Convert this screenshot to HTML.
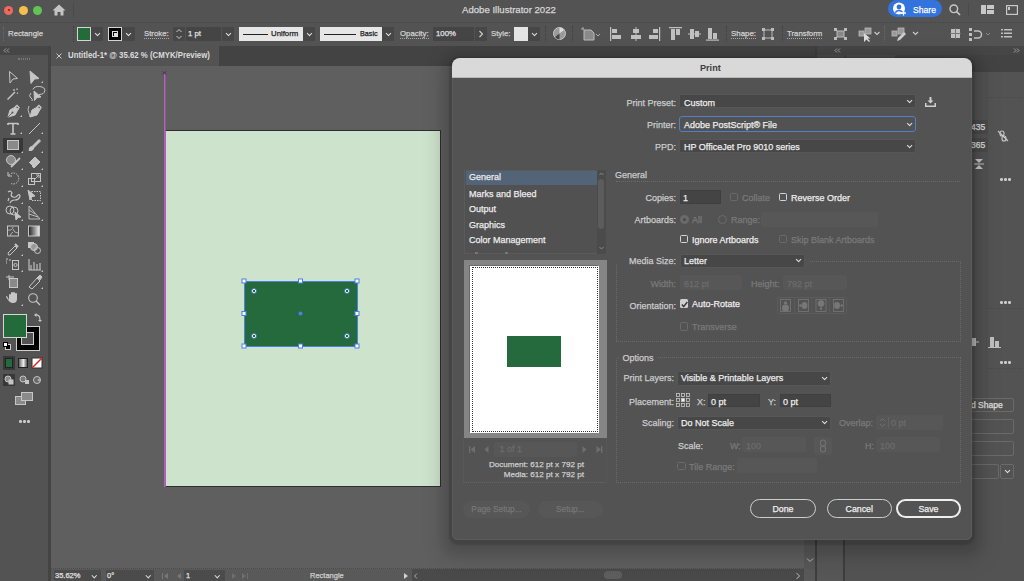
<!DOCTYPE html>
<html><head><meta charset="utf-8">
<style>
*{margin:0;padding:0;box-sizing:border-box}
html,body{width:1024px;height:581px;overflow:hidden;background:#535353;font-family:"Liberation Sans",sans-serif;color:#d8d8d8}
.a{position:absolute}
.t{position:absolute;white-space:nowrap;line-height:1;-webkit-text-stroke:0.25px currentColor}
svg{position:absolute;overflow:visible}
#titlebar{left:0;top:0;width:1024px;height:22px;background:#535353}
#ctrl{left:0;top:22px;width:1024px;height:24px;background:#535353;border-top:1px dotted #454545}
#tabbar{left:49px;top:46px;width:769px;height:20px;background:#434343}
#tab{left:51px;top:46px;width:168px;height:20px;background:#535353}
#tools{left:0;top:46px;width:48px;height:535px;background:#535353}
#toolsedge{left:48px;top:46px;width:3px;height:535px;background:#444444}
#canvas{left:51px;top:66px;width:753px;height:503px;background:#5f5f5f}
#vscroll{left:804px;top:66px;width:12px;height:503px;background:#575757}
#status{left:51px;top:569px;width:765px;height:12px;background:#595959}
#rpanel{left:816px;top:46px;width:208px;height:535px;background:#535353}
#artboard{left:165px;top:130px;width:276px;height:357px;background:#cde3cc;border:1px solid #2e2e2e;border-left:1px solid #b25bbf}
#dlg{left:452px;top:58px;width:520px;height:482px;background:#535353;border-radius:8px 8px 6px 6px;box-shadow:inset 1px 0 0 #5b5b5b,inset -1px 0 0 #5b5b5b,inset 0 -1px 0 #5b5b5b,0 2px 2px 3px rgba(0,0,0,.14),0 5px 8px 10px rgba(0,0,0,.09),0 10px 20px 14px rgba(0,0,0,.08)}
#dlgtitle{left:0;top:0;width:520px;height:20px;background:#d8d9d8;border-radius:8px 8px 0 0;border-bottom:1px solid #b8b8b8}
.cb{font-size:7.8px;color:#d0d0d0}
.lbl{font-size:9.8px;color:#cdcdcd;margin-top:-0.7px}
.val{font-size:9.8px;color:#eeeeee;margin-top:-0.7px}
.dis{font-size:9.8px;color:#7a7a7a;margin-top:-0.7px}
.dd{position:absolute;background:#474747;border-radius:2px}
.box{position:absolute;background:#474747}
.chev{position:absolute;width:4.2px;height:4.2px;border-right:1.3px solid #e0e0e0;border-bottom:1.3px solid #e0e0e0;transform:translate(0.5px,0.5px) rotate(45deg)}
.sep{position:absolute;width:1px;border-left:1px dotted #3f3f3f}
</style></head><body>
<!-- TITLE BAR -->
<div id="titlebar" class="a">
  <div class="a" style="left:4px;top:5.5px;width:9px;height:9px;border-radius:50%;background:#ec6a5e"></div>
  <div class="a" style="left:7.5px;top:9px;width:2px;height:2px;border-radius:50%;background:#8c1a10"></div>
  <div class="a" style="left:18.5px;top:5.5px;width:9px;height:9px;border-radius:50%;background:#f4bf4f"></div>
  <div class="a" style="left:32.5px;top:5.5px;width:9px;height:9px;border-radius:50%;background:#61c554"></div>
  <svg style="left:52px;top:4px" width="14" height="12" viewBox="0 0 14 12"><path d="M7 0.5 L13.5 6.5 L11.5 6.5 L11.5 11.5 L8.5 11.5 L8.5 8 L5.5 8 L5.5 11.5 L2.5 11.5 L2.5 6.5 L0.5 6.5 Z" fill="#c4c4c4"/></svg>
  <div class="a" style="left:73px;top:3px;width:1px;height:14px;background:#4a4a4a"></div>
  <div class="t" style="left:462px;top:5px;font-size:9.6px;color:#d6d6d6">Adobe Illustrator 2022</div>
  <div class="a" style="left:888px;top:0px;width:54px;height:17px;border-radius:9px;background:#3373dd"></div>
  <svg style="left:893px;top:2px" width="14" height="14" viewBox="0 0 14 14"><circle cx="6" cy="6.5" r="6" fill="#fff"/><circle cx="6" cy="5" r="2.4" fill="#3373dd"/><path d="M2.2 10.5 Q6 6.5 9.8 10.5" stroke="#3373dd" stroke-width="1.6" fill="none"/><path d="M10.5 8.5 v5 M8 11 h5" stroke="#fff" stroke-width="1.3"/></svg>
  <div class="t" style="left:912.5px;top:4.6px;font-size:9.6px;color:#fff;transform:scaleX(0.9);transform-origin:0 0">Share</div>
  <svg style="left:949px;top:4px" width="12" height="12" viewBox="0 0 12 12"><circle cx="4.8" cy="4.8" r="3.8" stroke="#c8c8c8" stroke-width="1.4" fill="none"/><path d="M7.6 7.6 L11 11" stroke="#c8c8c8" stroke-width="1.6"/></svg>
  <div class="a" style="left:968px;top:3px;width:1px;height:13px;background:#4a4a4a"></div>
  <svg style="left:981px;top:5px" width="13" height="9" viewBox="0 0 13 9"><rect x="0" y="0" width="5" height="9" fill="#c8c8c8"/><rect x="6" y="0" width="7" height="4" fill="#c8c8c8"/><rect x="6" y="5" width="7" height="4" fill="#c8c8c8"/></svg>
  <svg style="left:1006px;top:5px" width="12" height="10" viewBox="0 0 12 10"><rect x="0.6" y="0.6" width="10.8" height="8.8" stroke="#c8c8c8" stroke-width="1.2" fill="none"/><rect x="2" y="2" width="2" height="3" fill="#c8c8c8"/></svg>
</div>

<!-- CONTROL BAR -->
<div id="ctrl" class="a"></div>
<div class="sep" style="left:3px;top:27px;height:14px;border-left-color:#6a6a6a"></div>
<div class="t cb" style="left:8px;top:30px">Rectangle</div>
<div class="sep" style="left:73px;top:26px;height:16px"></div>
<div class="a" style="left:77px;top:27px;width:14px;height:14px;background:#246b3c;border:1px solid #d4d4d4"></div>
<div class="box" style="left:91px;top:27px;width:12px;height:14px"></div>
<div class="chev" style="left:94.5px;top:30.5px;width:4px;height:4px"></div>
<div class="a" style="left:108px;top:27px;width:14px;height:14px;background:#000;border:1px solid #d4d4d4"></div>
<div class="a" style="left:112px;top:31px;width:6px;height:6px;border:1px solid #ddd;background:#000"></div>
<div class="a" style="left:113.5px;top:32.5px;width:3px;height:3px;background:#ddd"></div>
<div class="box" style="left:122px;top:27px;width:13px;height:14px"></div>
<div class="chev" style="left:126px;top:30.5px;width:4px;height:4px"></div>
<div class="t cb" style="left:144px;top:30px;border-bottom:1px dotted #aaa;padding-bottom:0px">Stroke:</div>
<div class="box" style="left:173px;top:27px;width:12px;height:14px"></div>
<svg style="left:175px;top:28px" width="8" height="12" viewBox="0 0 8 12"><path d="M1.5 4 L4 1.5 L6.5 4 M1.5 8 L4 10.5 L6.5 8" stroke="#cfcfcf" stroke-width="1" fill="none"/></svg>
<div class="box" style="left:186px;top:27px;width:35px;height:14px;background:#454545"></div>
<div class="t cb" style="left:188px;top:30px;color:#e0e0e0">1 pt</div>
<div class="box" style="left:222px;top:27px;width:12px;height:14px"></div>
<div class="chev" style="left:225.5px;top:30.5px;width:4px;height:4px"></div>
<div class="a" style="left:239px;top:27px;width:64px;height:14px;background:#e6e6e6"></div>
<div class="a" style="left:243px;top:33.5px;width:25px;height:1.3px;background:#222"></div>
<div class="t cb" style="left:271px;top:30px;color:#222">Uniform</div>
<div class="box" style="left:303px;top:27px;width:12px;height:14px"></div>
<div class="chev" style="left:306.5px;top:30.5px;width:4px;height:4px"></div>
<div class="a" style="left:320px;top:27px;width:62px;height:14px;background:#e6e6e6"></div>
<div class="a" style="left:324px;top:33.5px;width:32px;height:1.3px;background:#222"></div>
<div class="t cb" style="left:360px;top:30px;color:#222;font-size:7.2px">Basic</div>
<div class="box" style="left:382px;top:27px;width:12px;height:14px"></div>
<div class="chev" style="left:385.5px;top:30.5px;width:4px;height:4px"></div>
<div class="t cb" style="left:400px;top:30px;border-bottom:1px dotted #aaa">Opacity:</div>
<div class="box" style="left:433px;top:27px;width:41px;height:14px;background:#454545"></div>
<div class="t cb" style="left:436px;top:30px;color:#e0e0e0">100%</div>
<div class="box" style="left:475px;top:27px;width:12px;height:14px"></div>
<svg style="left:478px;top:30px" width="6" height="8" viewBox="0 0 6 8"><path d="M1.5 1 L4.5 4 L1.5 7" stroke="#cfcfcf" stroke-width="1.1" fill="none"/></svg>
<div class="t cb" style="left:491px;top:30px">Style:</div>
<div class="a" style="left:514px;top:27px;width:14px;height:14px;background:#e4e4e4"></div>
<div class="box" style="left:528px;top:27px;width:12px;height:14px"></div>
<div class="chev" style="left:531.5px;top:30.5px;width:4px;height:4px"></div>
<div class="sep" style="left:545px;top:26px;height:16px"></div>
<svg style="left:553px;top:27px" width="13" height="13" viewBox="0 0 13 13"><circle cx="6.5" cy="6.5" r="6" fill="#9a9a9a"/><circle cx="6.5" cy="6.5" r="6" fill="none" stroke="#c8c8c8" stroke-width="1"/><path d="M6.5 6.5 L2 10 A6 6 0 0 0 6.5 12.5 Z" fill="#444"/><path d="M6.5 6.5 L11 3 A6 6 0 0 0 6.5 0.5 Z" fill="#ddd"/></svg>
<div class="sep" style="left:572px;top:26px;height:16px"></div>
<svg style="left:581px;top:27px" width="22" height="14" viewBox="0 0 22 14"><path d="M2 0 v3 M0 2 h3" stroke="#aaa" stroke-width="1"/><path d="M3 3 h7 l3 3 v7 h-10 z" fill="#8a8a8a" stroke="#bbb" stroke-width="1"/><path d="M15 7 l2 2 l2 -2" stroke="#aaa" fill="none"/></svg>
<!-- align icons -->
<svg style="left:610px;top:27px" width="112" height="14" viewBox="0 0 112 14" fill="#c0c0c0">
 <rect x="0" y="0" width="1.2" height="14"/><rect x="2" y="2" width="5" height="4"/><rect x="2" y="8" width="9" height="4"/>
 <rect x="25.5" y="0" width="1" height="14"/><rect x="23" y="2" width="6" height="4"/><rect x="21" y="8" width="10" height="4"/>
 <rect x="49" y="0" width="1.2" height="14"/><rect x="43" y="2" width="5" height="4"/><rect x="39" y="8" width="9" height="4"/>
 <rect x="59" y="0" width="13" height="1.2"/><rect x="61" y="2" width="4" height="11"/><rect x="66" y="2" width="4" height="6"/>
 <rect x="78" y="6.5" width="13" height="1"/><rect x="80" y="2" width="4" height="10"/><rect x="85" y="4" width="4" height="6"/>
 <rect x="96" y="12.5" width="13" height="1.2"/><rect x="98" y="1" width="4" height="11"/><rect x="103" y="6" width="4" height="6"/>
</svg>
<div class="sep" style="left:726px;top:26px;height:16px"></div>
<div class="t cb" style="left:731px;top:30px;border-bottom:1px dotted #aaa;font-size:7.9px">Shape:</div>
<svg style="left:762px;top:28px" width="12" height="12" viewBox="0 0 12 12"><rect x="2" y="2" width="8" height="8" fill="none" stroke="#bbb" stroke-width="1"/><rect x="0" y="0" width="3" height="3" fill="#bbb"/><rect x="9" y="0" width="3" height="3" fill="#bbb"/><rect x="0" y="9" width="3" height="3" fill="#bbb"/><rect x="9" y="9" width="3" height="3" fill="#bbb"/></svg>
<div class="sep" style="left:782px;top:26px;height:16px"></div>
<div class="t cb" style="left:787px;top:30px;border-bottom:1px dotted #aaa">Transform</div>
<svg style="left:834px;top:28px" width="13" height="12" viewBox="0 0 13 12"><rect x="3" y="3" width="7" height="6" fill="#888" stroke="#bbb" stroke-width="1"/><path d="M0 0 h3 v3 h-3z M10 0 h3 v3 h-3z M0 9 h3 v3 h-3z M10 9 h3 v3 h-3z" fill="#bbb"/></svg>
<svg style="left:859px;top:28px" width="26" height="14" viewBox="0 0 26 14"><rect x="0" y="3" width="5" height="5" fill="#999" stroke="#bbb" stroke-width="0.8"/><rect x="6" y="0" width="6" height="6" fill="#999" stroke="#bbb" stroke-width="0.8"/><path d="M5 5 l0 9 l2.5 -2.5 l2.5 2.5 l1 -1 l-2.5 -2.5 l3 0 z" fill="#ddd"/><path d="M15.5 4 l2.5 2.5 l2.5 -2.5" stroke="#ccc" stroke-width="1.1" fill="none"/></svg>
<div class="sep" style="left:884px;top:26px;height:16px;border-left-color:#6a6a6a"></div>
<svg style="left:892px;top:28px" width="28" height="14" viewBox="0 0 28 14"><rect x="0" y="3" width="5" height="5" fill="#999" stroke="#bbb" stroke-width="0.8"/><rect x="6" y="0" width="6" height="6" fill="#999" stroke="#bbb" stroke-width="0.8"/><path d="M5 13 l1 -3 l6 -6 l2 2 l-6 6 z" fill="#ccc"/><path d="M21 4 l2.5 2.5 l2.5 -2.5" stroke="#ccc" stroke-width="1.1" fill="none"/></svg>
<svg style="left:950px;top:28px" width="11" height="11" viewBox="0 0 11 11" fill="#c0c0c0"><rect x="1" y="1" width="4" height="4"/><rect x="6" y="1" width="4" height="4"/><rect x="1" y="6" width="4" height="4"/><rect x="6" y="6" width="4" height="4"/><rect x="5" y="0" width="1" height="11" fill="#777"/><rect x="0" y="5" width="11" height="1" fill="#777"/></svg>
<svg style="left:969px;top:28px" width="24" height="13" viewBox="0 0 24 13"><rect x="0" y="0" width="3" height="3" fill="#c0c0c0"/><rect x="0" y="5" width="3" height="3" fill="#c0c0c0"/><rect x="0" y="10" width="3" height="3" fill="#c0c0c0"/><path d="M5 3 h4 a3.5 3.5 0 0 1 0 7 h-4" stroke="#c0c0c0" stroke-width="1.5" fill="none"/><path d="M17 5 l2 2 l2 -2" stroke="#888" stroke-width="1" fill="none"/></svg>
<svg style="left:1001px;top:29px" width="11" height="9" viewBox="0 0 11 9" fill="#c0c0c0"><rect x="0" y="0" width="2" height="1.5"/><rect x="3" y="0" width="8" height="1.5"/><rect x="0" y="3.5" width="2" height="1.5"/><rect x="3" y="3.5" width="8" height="1.5"/><rect x="0" y="7" width="2" height="1.5"/><rect x="3" y="7" width="8" height="1.5"/></svg>

<!-- TOOLBAR, TABS, CANVAS -->
<div id="tools" class="a"></div>
<div id="toolsedge" class="a"></div>

<!-- TOOL ICONS -->
<div class="a" style="left:0;top:46px;width:48px;height:9px;background:#464646"></div>
<svg style="left:3px;top:48px" width="7" height="5" viewBox="0 0 7 5"><path d="M3 0.5 L1 2.5 L3 4.5 M6 0.5 L4 2.5 L6 4.5" stroke="#aaa" stroke-width="0.9" fill="none"/></svg>
<div class="a" style="left:18px;top:58px;width:12px;height:2px;border-top:1px dotted #777;border-bottom:1px dotted #777"></div>
<div class="a" style="left:3px;top:138px;width:20px;height:15px;background:#383838"></div>
<svg style="left:0;top:62px" width="48" height="250" viewBox="0 0 48 250" fill="none" stroke="#c6c6c6" stroke-width="1">
 <!-- row1 y=15 -->
 <path d="M9.5 9.5 L17.5 16.5 L13 17 L10 21 Z"/>
 <path d="M30 9 L39 16.5 L34.5 17 L31 21.5 Z" fill="#c6c6c6"/>
 <path d="M41 21 l2 -2 v2 z" fill="#c6c6c6" stroke="none"/>
 <!-- row2 y=32 -->
 <path d="M7.5 37.5 L15 30" stroke-width="1.4"/><path d="M14 27 v2 M13 28 h2 M17 26.5 v1.5 M16.3 27.2 h1.5 M17.5 30.5 v1.3 M16.8 31.2 h1.3" stroke-width="0.8"/>
 <path d="M33 27.5 a6 4 0 1 1 6 5" /><path d="M31 31 q-3 3 0 5 q2 1 1 3"/><path d="M34 29 L41 35 L37 35.5 L34.5 38.5 Z" fill="#c6c6c6"/>
 <!-- row3 y=49 -->
 <path d="M8 55 L10 48 L15.5 45 L18 47.5 L15 53 Z" fill="#c6c6c6"/><path d="M15 45 l2 -1.5 l2 2 l-1.5 2" stroke-width="1.4"/><circle cx="12.5" cy="50.5" r="1" fill="#535353" stroke="none"/><path d="M8 55 l4 -4" stroke="#535353" stroke-width="0.8"/>
 <path d="M20 55 l2 -2 v2 z" fill="#c6c6c6" stroke="none"/>
 <path d="M30 55 L32 48 L37.5 45 L40 47.5 L37 53 Z" fill="#c6c6c6"/><path d="M37 45 l2 -1.5 l2 2 l-1.5 2" stroke-width="1.4"/><path d="M29 44 q-2 4 0 7 q1 3 1 4" stroke-width="0.9"/>
 <!-- row4 y=66 -->
 <path d="M8 61.5 h10 M13 61.5 v10.5 M10.5 72 h5 M8 61 v2 M18 61 v2" stroke-width="1.6"/>
 <path d="M20 72 l2 -2 v2 z" fill="#c6c6c6" stroke="none"/>
 <path d="M29 72 L40 61"/>
 <path d="M41 72 l2 -2 v2 z" fill="#c6c6c6" stroke="none"/>
 <!-- row5 y=83 rect, brush -->
 <rect x="7.5" y="78.5" width="11" height="9" fill="#8a8a8a" stroke="#c6c6c6"/>
 <path d="M21 91 l2 -2 v2 z" fill="#c6c6c6" stroke="none"/>
 <path d="M29 88.5 q0 -4 3 -4 l7 -7 l1.5 1.5 l-7 7 q0 3 -4.5 2.5 z" fill="#c6c6c6"/>
 <path d="M41 91 l2 -2 v2 z" fill="#c6c6c6" stroke="none"/>
 <!-- row6 y=100 shaper, eraser -->
 <circle cx="11" cy="98" r="4.5" fill="#8a8a8a"/><path d="M11 105 L20 96" stroke-width="1.8"/>
 <path d="M21 108 l2 -2 v2 z" fill="#c6c6c6" stroke="none"/>
 <path d="M29 101 l6 -6 l5 5 l-6 6 z" fill="#c6c6c6"/><path d="M29 101 l3 3" stroke="#535353"/>
 <path d="M41 108 l2 -2 v2 z" fill="#c6c6c6" stroke="none"/>
 <!-- row7 y=117 rotate, scale -->
 <path d="M9 113 a5.5 5.5 0 1 1 2 8.5" stroke-dasharray="1.5 1"/><path d="M8 110 v4 h4" />
 <path d="M21 125 l2 -2 v2 z" fill="#c6c6c6" stroke="none"/>
 <rect x="28.5" y="116.5" width="6" height="6"/><rect x="31.5" y="111.5" width="9" height="8"/><path d="M34 118 l5 -5 M36 113 h3 v3" stroke-width="0.9"/>
 <path d="M41 125 l2 -2 v2 z" fill="#c6c6c6" stroke="none"/>
 <!-- row8 y=134 warp, free transform -->
 <path d="M8 130 q3 -2 4 1 q-2 3 1 4 q3 1 5 -2 q2 -1 2 1 q-1 4 -5 4 q-4 0 -5 3 M9 136 l-1 3" stroke-width="1.2"/>
 <path d="M21 142 l2 -2 v2 z" fill="#c6c6c6" stroke="none"/>
 <path d="M28 128 L35 134 L32 134.5 L30 138 Z" fill="#c6c6c6"/><rect x="31.5" y="129.5" width="9" height="9" stroke-dasharray="1.5 1"/>
 <path d="M41 142 l2 -2 v2 z" fill="#c6c6c6" stroke="none"/>
 <!-- row9 y=151 shape builder, perspective -->
 <circle cx="10" cy="148" r="4"/><circle cx="14" cy="149" r="4"/><path d="M15 150 L21 155 L18 155.5 L16 158 Z" fill="#c6c6c6"/>
 <path d="M21 159 l2 -2 v2 z" fill="#c6c6c6" stroke="none"/>
 <path d="M29 144 v13 h11 z M29 148 l6 4 M29 152 l9 3" stroke-width="0.9"/>
 <path d="M41 159 l2 -2 v2 z" fill="#c6c6c6" stroke="none"/>
 <!-- row10 y=169 mesh, gradient -->
 <rect x="7.5" y="164" width="11" height="10"/><path d="M8 168 q4 1 5 -3 M13 167 q1 4 5 4 M10 174 q1 -3 3 -4" stroke-width="0.8"/>
 <rect x="28.5" y="164" width="11" height="10" fill="url(#g1)"/>
 <!-- row11 y=186 eyedropper, blend -->
 <path d="M8 191 l7 -7 l2 2 l-7 7 q-2 1 -2 -2 z"/><path d="M15 182 l3 3" stroke-width="2"/>
 <path d="M21 194 l2 -2 v2 z" fill="#c6c6c6" stroke="none"/>
 <rect x="28.5" y="180.5" width="5" height="5" fill="#c6c6c6"/><circle cx="34" cy="185" r="3.5" fill="#999"/><circle cx="37.5" cy="188.5" r="3"/>
 <!-- row12 y=203 symbol sprayer, graph -->
 <path d="M6 197 h2 M6 199 h1 M9 198 h2 M6 201 h1" stroke-width="1"/><rect x="12.5" y="198.5" width="6" height="9"/><circle cx="15.5" cy="203" r="1.6"/>
 <path d="M21 210 l2 -2 v2 z" fill="#c6c6c6" stroke="none"/>
 <path d="M29 197 v11 h12 M31 208 v-5 M34 208 v-8 M37 208 v-6 M40 208 v-7" stroke-width="1.1"/>
 <path d="M41 210 l2 -2 v2 z" fill="#c6c6c6" stroke="none"/>
 <!-- row13 y=220 artboard, slice -->
 <path d="M9 213 v5 M6 215 h8"/><rect x="9.5" y="216.5" width="8" height="9" fill="#8a8a8a"/>
 <path d="M29 225 l8 -9 l3 3 l-8 8 z" fill="none"/><path d="M37 216 l3 -3 l2 2 l-2 3" fill="#c6c6c6"/>
 <path d="M41 227 l2 -2 v2 z" fill="#c6c6c6" stroke="none"/>
 <!-- row14 y=237 hand, zoom -->
 <path d="M9 238 v-5 q0 -1 1 -1 q1 0 1 1 v3 v-5 q0 -1 1 -1 q1 0 1 1 v4 v-4 q0 -1 1 -1 q1 0 1 1 v4 v-3 q0 -1 1 -1 q1 0 1 1 v5 q0 4 -4 4 h-1 q-2 0 -4 -3 l-2 -3 q0 -1 1 -1 z" fill="#c6c6c6" stroke="none"/>
 <path d="M21 244 l2 -2 v2 z" fill="#c6c6c6" stroke="none"/>
 <circle cx="33" cy="236" r="4.3" stroke-width="1.1"/><path d="M36 239 l4 4" stroke-width="1.3"/>
</svg>
<svg width="0" height="0" style="position:absolute"><defs><linearGradient id="g1"><stop offset="0" stop-color="#222"/><stop offset="1" stop-color="#eee"/></linearGradient><linearGradient id="g2"><stop offset="0" stop-color="#777"/><stop offset="0.5" stop-color="#eee"/><stop offset="1" stop-color="#555"/></linearGradient></defs></svg>
<!-- fill/stroke -->
<div class="a" style="left:16px;top:326px;width:24px;height:25px;background:#000;border:1px solid #cfcfcf"></div>
<div class="a" style="left:21px;top:332px;width:13px;height:13px;border:1px solid #cfcfcf;background:#535353"></div>
<div class="a" style="left:22px;top:333px;width:11px;height:11px;background:#535353"></div>
<div class="a" style="left:3px;top:314px;width:24px;height:24px;background:#246b3c;border:1px solid #d6d6d6"></div>
<svg style="left:34px;top:313px" width="8" height="9" viewBox="0 0 8 9"><path d="M1 2 q5 -1 5 5" stroke="#c6c6c6" stroke-width="1.1" fill="none"/><path d="M0 2 l2.5 -2 v4 z M4 7 h4 l-2 2 z" fill="#c6c6c6"/></svg>
<div class="a" style="left:5px;top:344px;width:6px;height:6px;border:1px solid #ccc;background:#000"></div>
<div class="a" style="left:3px;top:342px;width:5px;height:5px;border:1px solid #000;background:#fff"></div>
<!-- color modes -->
<div class="a" style="left:3px;top:356px;width:12px;height:14px;background:#383838"></div>
<div class="a" style="left:5px;top:358px;width:8px;height:10px;background:#246b3c;border:1px solid #222"></div>
<div class="a" style="left:18px;top:358px;width:10px;height:10px;background:linear-gradient(90deg,#666,#eee 55%,#555);border:1px solid #222"></div>
<svg style="left:32px;top:358px" width="10" height="10" viewBox="0 0 10 10"><rect x="0" y="0" width="10" height="10" fill="#fff" stroke="#333" stroke-width="1"/><path d="M0 10 L10 0" stroke="#e0201a" stroke-width="1.5"/></svg>
<div class="a" style="left:3px;top:374px;width:12px;height:12px;background:#383838"></div>
<svg style="left:4px;top:375px" width="40" height="10" viewBox="0 0 40 10" fill="none" stroke="#c6c6c6" stroke-width="1"><circle cx="4" cy="4" r="3" fill="#888"/><rect x="5" y="5" width="4" height="4" fill="#c6c6c6"/><circle cx="19" cy="4" r="3" fill="#777"/><rect x="21" y="5" width="4" height="4" fill="#c6c6c6" stroke="none"/><circle cx="33" cy="5" r="3.5" fill="#666"/><path d="M33 5 l3 -2 v4z" fill="#aaa" stroke="none"/></svg>
<svg style="left:15px;top:392px" width="18" height="13" viewBox="0 0 18 13" fill="none" stroke="#c6c6c6" stroke-width="1"><rect x="0.5" y="4.5" width="10" height="8" fill="#8a8a8a"/><rect x="6.5" y="0.5" width="11" height="8" fill="#8a8a8a"/></svg>
<div class="a" style="left:19px;top:420px;width:2.5px;height:2.5px;border-radius:50%;background:#ccc;box-shadow:4px 0 0 #ccc,8px 0 0 #ccc"></div>
<div id="tabbar" class="a"></div>
<div id="tab" class="a"></div>
<svg style="left:56px;top:53px" width="6" height="6" viewBox="0 0 6 6"><path d="M0.5 0.5 L5.5 5.5 M5.5 0.5 L0.5 5.5" stroke="#c8c8c8" stroke-width="1"/></svg>
<div class="t" style="left:68px;top:51.5px;font-size:8.2px;font-weight:700;color:#dcdcdc;-webkit-text-stroke:0;transform:scaleX(0.955);transform-origin:0 0">Untitled-1* @ 35.62 % (CMYK/Preview)</div>
<div id="canvas" class="a"></div>
<div id="vscroll" class="a"></div>
<div id="status" class="a"></div>
<div id="rpanel" class="a"></div>
<!-- RIGHT PANEL -->
<div class="a" style="left:815px;top:46px;width:2px;height:535px;background:#3e3e3e"></div>
<div class="a" style="left:817px;top:46px;width:207px;height:9px;background:#464646"></div>
<svg style="left:834px;top:48px" width="7" height="5" viewBox="0 0 7 5"><path d="M3 0.5 L1 2.5 L3 4.5 M6 0.5 L4 2.5 L6 4.5" stroke="#aaa" stroke-width="0.9" fill="none"/></svg>
<svg style="left:1013px;top:48px" width="7" height="5" viewBox="0 0 7 5"><path d="M1 0.5 L3 2.5 L1 4.5 M4 0.5 L6 2.5 L4 4.5" stroke="#aaa" stroke-width="0.9" fill="none"/></svg>
<div class="a" style="left:817px;top:55px;width:207px;height:17px;background:#434343"></div>
<div class="a" style="left:817px;top:55px;width:27px;height:3px;background:#4d4d4d"></div>
<div class="a" style="left:846px;top:55px;width:49px;height:3px;background:#4d4d4d"></div>
<div class="a" style="left:817px;top:72px;width:27px;height:509px;background:#575757"></div>
<div class="a" style="left:843px;top:72px;width:2px;height:509px;background:#3e3e3e"></div>
<div class="a" style="left:986px;top:72px;width:1px;height:340px;border-left:1px dotted #4a4a4a"></div>
<div class="box" style="left:968px;top:120px;width:20px;height:14px;background:#4b4b4b"></div>
<div class="t" style="left:971px;top:123px;font-size:8.5px;color:#e0e0e0">435</div>
<div class="box" style="left:968px;top:138px;width:20px;height:14px;background:#4b4b4b"></div>
<div class="t" style="left:971px;top:141px;font-size:8.5px;color:#e0e0e0">365</div>
<svg style="left:997px;top:130px" width="12" height="12" viewBox="0 0 12 12" fill="none" stroke="#c8c8c8" stroke-width="1.1"><rect x="3" y="1" width="4" height="5" rx="2"/><rect x="5" y="6" width="4" height="5" rx="2"/><path d="M1 1 L11 11"/></svg>
<svg style="left:974px;top:158px" width="10" height="12" viewBox="0 0 10 12"><path d="M1 1 h8 l-4 4 z M1 11 h8 l-4 -4z" fill="#c8c8c8"/><path d="M0 6 h10" stroke="#c8c8c8"/></svg>
<div class="a" style="left:1000px;top:178px;width:2.5px;height:2.5px;border-radius:50%;background:#ccc;box-shadow:4px 0 0 #ccc,8px 0 0 #ccc"></div>
<div class="a" style="left:1000px;top:301px;width:2.5px;height:2.5px;border-radius:50%;background:#ccc;box-shadow:4px 0 0 #ccc,8px 0 0 #ccc"></div>
<svg style="left:972px;top:336px" width="32" height="12" viewBox="0 0 32 12" fill="#c0c0c0"><rect x="0" y="2" width="4" height="8"/><rect x="4" y="5.5" width="3" height="1"/><rect x="18" y="1" width="4" height="10"/><rect x="23" y="5" width="4" height="6"/><rect x="16" y="11" width="13" height="1"/></svg><div class="a" style="left:987px;top:97px;width:35px;height:1px;border-top:1px dotted #4a4a4a"></div><div class="a" style="left:987px;top:308px;width:35px;height:1px;border-top:1px dotted #4a4a4a"></div><div class="a" style="left:987px;top:368px;width:35px;height:1px;border-top:1px dotted #4a4a4a"></div>
<div class="a" style="left:1000px;top:361px;width:2.5px;height:2.5px;border-radius:50%;background:#ccc;box-shadow:4px 0 0 #ccc,8px 0 0 #ccc"></div>
<div class="a" style="left:960px;top:398px;width:54px;height:14px;border:1px solid #6a6a6a;border-radius:2px"></div>
<div class="t" style="left:971px;top:401px;font-size:8.5px;color:#e0e0e0">d Shape</div>
<div class="a" style="left:960px;top:419px;width:54px;height:15px;border:1px solid #6a6a6a;border-radius:2px"></div>
<div class="a" style="left:960px;top:441px;width:54px;height:15px;border:1px solid #6a6a6a;border-radius:2px"></div>
<div class="a" style="left:960px;top:464px;width:39px;height:15px;border:1px solid #6a6a6a;border-radius:2px"></div>
<div class="a" style="left:1000px;top:464px;width:14px;height:15px;border:1px solid #6a6a6a;border-radius:2px"></div>
<div class="chev" style="left:1005px;top:468px;width:4px;height:4px"></div>

<div id="artboard" class="a"></div>
<!-- ARTBOARD CONTENT -->
<div class="a" style="left:426px;top:131px;width:14px;height:355px;background:linear-gradient(90deg,rgba(0,0,0,0),rgba(0,0,0,.025))"></div>
<div class="a" style="left:164px;top:72px;width:1px;height:415px;background:#b65cc2"></div><div class="a" style="left:165px;top:72px;width:1px;height:415px;background:rgba(182,92,194,.45)"></div>
<svg style="left:162px;top:71px" width="5" height="4" viewBox="0 0 5 4"><path d="M0.5 0.5 L4.5 3.5 M4.5 0.5 L0.5 3.5" stroke="#4a2a50" stroke-width="0.9"/></svg>

<div class="a" style="left:244px;top:281px;width:114px;height:66px;background:#256a3d;border:1px solid #4a7ee8"></div>
<svg style="left:240px;top:277px" width="122" height="74" viewBox="0 0 122 74">
 <g fill="#fff" stroke="#4a7ee8" stroke-width="1">
  <rect x="2" y="2" width="4" height="4"/><rect x="58.5" y="2" width="4" height="4"/><rect x="115" y="2" width="4" height="4"/>
  <rect x="2" y="34.5" width="4" height="4"/><rect x="115" y="34.5" width="4" height="4"/>
  <rect x="2" y="67" width="4" height="4"/><rect x="58.5" y="67" width="4" height="4"/><rect x="115" y="67" width="4" height="4"/>
 </g>
 <g fill="none" stroke="#fff" stroke-width="1"><circle cx="14" cy="14" r="1.8"/><circle cx="107" cy="14" r="1.8"/><circle cx="14" cy="59" r="1.8"/><circle cx="107" cy="59" r="1.8"/></g>
 <g fill="none" stroke="#4a7ee8" stroke-width="0.7"><circle cx="14" cy="14" r="2.6"/><circle cx="107" cy="14" r="2.6"/><circle cx="14" cy="59" r="2.6"/><circle cx="107" cy="59" r="2.6"/></g>
 <circle cx="60.5" cy="36.5" r="2" fill="#4a7ee8"/>
</svg>

<!-- STATUS BAR -->
<div class="a" style="left:51px;top:568px;width:753px;height:1px;border-top:1px dotted #4c4c4c"></div>
<div class="box" style="left:53.5px;top:570px;width:35px;height:11px;background:#4b4b4b"></div>
<div class="t" style="left:55px;top:572px;font-size:7.5px;color:#e0e0e0">35.62%</div>
<div class="box" style="left:89px;top:570px;width:11.5px;height:11px;background:#4b4b4b"></div>
<div class="chev" style="left:92px;top:572.5px;width:3.5px;height:3.5px"></div>
<div class="box" style="left:105.5px;top:570px;width:36px;height:11px;background:#4b4b4b"></div>
<div class="t" style="left:107px;top:572px;font-size:7.5px;color:#e0e0e0">0°</div>
<div class="box" style="left:142px;top:570px;width:11.5px;height:11px;background:#4b4b4b"></div>
<div class="chev" style="left:146px;top:572.5px;width:3.5px;height:3.5px"></div>
<svg style="left:160px;top:572px" width="30" height="8" viewBox="0 0 30 8" fill="#777"><rect x="2" y="1" width="1" height="6"/><path d="M8 1 v6 l-4 -3z"/><path d="M21 1 v6 l-4 -3z"/></svg>
<div class="box" style="left:183.5px;top:570px;width:28px;height:11px;background:#4b4b4b"></div>
<div class="t" style="left:186px;top:572px;font-size:7.5px;color:#e0e0e0">1</div>
<div class="box" style="left:212px;top:570px;width:12.5px;height:11px;background:#4b4b4b"></div>
<div class="chev" style="left:215px;top:572.5px;width:3.5px;height:3.5px"></div>
<svg style="left:230px;top:572px" width="22" height="8" viewBox="0 0 22 8" fill="#6e6e6e"><path d="M2 1 v6 l4 -3z"/><path d="M12 1 v6 l4 -3z"/><rect x="17" y="1" width="1" height="6"/></svg>
<div class="t" style="left:310px;top:572px;font-size:7.5px;color:#cfcfcf">Rectangle</div>
<div class="a" style="left:412px;top:569px;width:392px;height:12px;background:#4a4a4a"></div><svg style="left:403px;top:572px" width="18" height="8" viewBox="0 0 18 8"><path d="M1 1 v6 l4 -3z" fill="#d0d0d0"/><path d="M14 1.5 l-2.5 2.5 l2.5 2.5" stroke="#aaa" fill="none"/></svg>

<div class="a" style="left:604px;top:571px;width:18px;height:8px;border-radius:4px;background:#5e5e5e"></div>
<svg style="left:795px;top:572px" width="6" height="8" viewBox="0 0 6 8"><path d="M1.5 1 L4.5 4 L1.5 7" stroke="#bbb" stroke-width="1" fill="none"/></svg>
<svg style="left:806px;top:557px" width="8" height="6" viewBox="0 0 8 6"><path d="M1 1.5 L4 4.5 L7 1.5" stroke="#bbb" stroke-width="1" fill="none"/></svg>


<!-- DIALOG -->
<div id="dlg" class="a">
  <div id="dlgtitle" class="a"></div>
</div>

<!-- DIALOG CONTENT -->
<div class="t" style="left:700.4px;top:62.6px;font-size:9.8px;font-weight:700;color:#404040;-webkit-text-stroke:0;transform:scaleX(0.93);transform-origin:0 0">Print</div>

<div class="t lbl" style="transform:scaleX(0.918);transform-origin:100% 0;left:576px;width:100px;text-align:right;top:98.2px">Print Preset:</div>
<div class="dd" style="left:679px;top:94px;width:237px;height:14px;border:1px solid #575757"></div>
<div class="t val" style="transform:scaleX(0.918);transform-origin:0 0;left:684px;top:98.2px">Custom</div>
<div class="chev" style="left:906.5px;top:98px"></div>
<svg style="left:925px;top:97px" width="11" height="10" viewBox="0 0 11 10" fill="#cfcfcf"><rect x="4.5" y="0" width="2" height="4"/><path d="M2.5 3.5 h6 l-3 3 z"/><path d="M0 6 h1.5 v2.5 h8 v-2.5 h1.5 v4 h-11 z"/></svg>

<div class="t lbl" style="transform:scaleX(0.918);transform-origin:100% 0;left:576px;width:100px;text-align:right;top:120.6px">Printer:</div>
<div class="dd" style="left:679px;top:116px;width:237px;height:15.5px;background:#525252;border:1.5px solid #4f81c9;border-radius:3px"></div>
<div class="t val" style="transform:scaleX(0.918);transform-origin:0 0;left:684px;top:120.6px">Adobe PostScript® File</div>
<div class="chev" style="left:906.5px;top:120.5px"></div>

<div class="t lbl" style="transform:scaleX(0.918);transform-origin:100% 0;left:576px;width:100px;text-align:right;top:142.6px">PPD:</div>
<div class="dd" style="left:679px;top:138.5px;width:237px;height:14.5px;border:1px solid #575757"></div>
<div class="t val" style="transform:scaleX(0.918);transform-origin:0 0;left:684px;top:142.6px">HP OfficeJet Pro 9010 series</div>
<div class="chev" style="left:906.5px;top:142.5px"></div>

<!-- list -->
<div class="a" style="left:464px;top:169.5px;width:142px;height:84.5px;background:#515151;border:1px solid #5a5a5a"></div>
<div class="a" style="left:465.5px;top:170.5px;width:131.5px;height:14.7px;background:#536378"></div>
<div class="a" style="left:597px;top:170px;width:8.5px;height:83.5px;background:#4b4b4b"></div>
<div class="a" style="left:598.2px;top:178.6px;width:6.2px;height:50px;border-radius:3px;background:#5c5c5c"></div>
<svg style="left:598px;top:171px" width="7" height="82" viewBox="0 0 7 82"><path d="M1.5 4 L3.5 2 L5.5 4 M1.5 76 L3.5 78 L5.5 76" stroke="#9a9a9a" stroke-width="0.8" fill="none"/></svg>
<div class="t val" style="transform:scaleX(0.918);transform-origin:0 0;left:468.8px;top:173px">General</div>
<div class="t val" style="transform:scaleX(0.918);transform-origin:0 0;left:468.8px;top:189.2px">Marks and Bleed</div>
<div class="t val" style="transform:scaleX(0.918);transform-origin:0 0;left:468.8px;top:204.9px">Output</div>
<div class="t val" style="transform:scaleX(0.918);transform-origin:0 0;left:468.8px;top:220.5px">Graphics</div>
<div class="t val" style="transform:scaleX(0.918);transform-origin:0 0;left:468.8px;top:236px">Color Management</div>
<div class="a" style="left:475px;top:251.5px;width:3px;height:2px;background:#777"></div>
<div class="a" style="left:505px;top:251.5px;width:3px;height:2px;background:#777"></div>

<!-- preview -->
<div class="a" style="left:464px;top:260px;width:143px;height:178px;background:#858585"></div>
<div class="a" style="left:470px;top:265.7px;width:129px;height:167px;background:#fff;box-shadow:-1px -1px 0 #6a6a6a"></div>
<div class="a" style="left:471.5px;top:267px;width:126px;height:164.5px;border:1.5px dotted #333"></div>
<div class="a" style="left:506.6px;top:335.6px;width:54.6px;height:31.8px;background:#256a3d"></div>
<svg style="left:468px;top:443px" width="136" height="14" viewBox="0 0 136 14" fill="#6e6e6e"><rect x="1" y="3" width="1.3" height="7"/><path d="M7 3 v7 l-4.5 -3.5z"/><path d="M20.5 3 v7 l-4 -3.5z"/><path d="M114.5 3 v7 l4 -3.5z"/><path d="M128.5 3 v7 l4.5 -3.5z"/><rect x="133" y="3" width="1.3" height="7"/></svg>
<div class="a" style="left:494px;top:442px;width:83px;height:14.7px;border-radius:2px;background:#575757"></div>
<div class="t dis" style="left:499.5px;top:445.5px;font-size:9px;color:#6c6c6c">1 of 1</div>
<div class="t lbl" style="left:488.6px;top:461.7px;font-size:8.1px;width:95.3px;text-align:right">Document: 612 pt x 792 pt</div>
<div class="t lbl" style="left:488.6px;top:471.4px;font-size:8.1px;width:95.3px;text-align:right">Media: 612 pt x 792 pt</div>
<div class="a" style="left:463px;top:438px;width:144px;height:45px;border-left:1px dotted #5e5e5e;border-bottom:1px dotted #666;border-right:1px dotted #5a5a5a"></div>

<!-- General section -->
<div class="t lbl" style="transform:scaleX(0.918);transform-origin:0 0;left:615.4px;top:171px">General</div>
<div class="a" style="left:616px;top:181px;width:344px;height:1px;border-top:1px dotted #6a6a6a"></div>

<div class="t lbl" style="transform:scaleX(0.918);transform-origin:100% 0;left:576px;width:100px;text-align:right;top:193.4px">Copies:</div>
<div class="a" style="left:680px;top:189.7px;width:41px;height:14.5px;background:#444;border:1px solid #3f3f3f"></div>
<div class="t val" style="transform:scaleX(0.918);transform-origin:0 0;left:683px;top:193.4px">1</div>
<div class="a" style="left:729.5px;top:192.8px;width:8.3px;height:8.3px;border:1px solid #6a6a6a;border-radius:1.5px"></div>
<div class="t dis" style="transform:scaleX(0.918);transform-origin:0 0;left:741.9px;top:193.4px">Collate</div>
<div class="a" style="left:778.6px;top:192.8px;width:8.5px;height:8.5px;border:1px solid #d4d4d4;border-radius:1.5px"></div>
<div class="t val" style="transform:scaleX(0.918);transform-origin:0 0;left:791px;top:193.4px">Reverse Order</div>

<div class="t lbl" style="transform:scaleX(0.918);transform-origin:100% 0;left:576px;width:100px;text-align:right;top:215.4px">Artboards:</div>
<div class="a" style="left:679.5px;top:214.7px;width:9px;height:9px;border-radius:50%;background:#6a6a6a"></div>
<div class="a" style="left:682.5px;top:217.7px;width:3px;height:3px;border-radius:50%;background:#4a4a4a"></div>
<div class="t dis" style="transform:scaleX(0.918);transform-origin:0 0;left:692px;top:215.4px">All</div>
<div class="a" style="left:718px;top:214.7px;width:9px;height:9px;border-radius:50%;border:1px solid #6a6a6a"></div>
<div class="t dis" style="transform:scaleX(0.918);transform-origin:0 0;left:730.6px;top:215.4px">Range:</div>
<div class="a" style="left:761px;top:212px;width:117px;height:14.6px;border-radius:2px;background:#575757"></div>

<div class="a" style="left:679.7px;top:234.7px;width:8.5px;height:8.5px;border:1px solid #d4d4d4;border-radius:1.5px"></div>
<div class="t val" style="transform:scaleX(0.918);transform-origin:0 0;left:691.5px;top:235.5px">Ignore Artboards</div>
<div class="a" style="left:778.6px;top:234.7px;width:8.5px;height:8.5px;border:1px solid #6a6a6a;border-radius:1.5px"></div>
<div class="t dis" style="transform:scaleX(0.918);transform-origin:0 0;left:791px;top:235.5px">Skip Blank Artboards</div>

<div class="a" style="left:616px;top:260.5px;width:344.5px;height:81.5px;border:1px dotted #6a6a6a;border-radius:4px 0 0 0"></div>
<div class="a" style="left:616px;top:259px;width:64px;height:4px;background:#535353"></div><div class="t lbl" style="transform:scaleX(0.918);transform-origin:100% 0;left:576px;width:100px;text-align:right;top:257px">Media Size:</div>
<div class="dd" style="left:679.7px;top:254px;width:125.7px;height:13.5px;border:1px solid #575757;box-shadow:0 0 0 4px #535353"></div>
<div class="t val" style="transform:scaleX(0.918);transform-origin:0 0;left:684px;top:257px">Letter</div>
<div class="chev" style="left:796px;top:256.5px"></div>

<div class="t dis" style="transform:scaleX(0.918);transform-origin:100% 0;left:576px;width:100px;text-align:right;top:279.5px">Width:</div>
<div class="a" style="left:679.5px;top:275.3px;width:62.5px;height:14.7px;border-radius:2px;background:#575757"></div>
<div class="t dis" style="transform:scaleX(0.918);transform-origin:0 0;left:683.5px;top:279.5px;color:#6c6c6c">612 pt</div>
<div class="t dis" style="transform:scaleX(0.918);transform-origin:0 0;left:750.9px;top:279.5px">Height:</div>
<div class="a" style="left:783px;top:275.3px;width:64px;height:14.7px;border-radius:2px;background:#575757"></div>
<div class="t dis" style="transform:scaleX(0.918);transform-origin:0 0;left:787px;top:279.5px;color:#6c6c6c">792 pt</div>

<div class="t lbl" style="transform:scaleX(0.918);transform-origin:100% 0;left:576px;width:100px;text-align:right;top:301.2px">Orientation:</div>
<div class="a" style="left:679.7px;top:299.4px;width:8.6px;height:8.6px;background:#d0d0d0;border-radius:1.5px"></div>
<svg style="left:680px;top:299.5px" width="9" height="9" viewBox="0 0 9 9"><path d="M1.8 4.5 L3.7 6.6 L7.3 2" stroke="#3a3a3a" stroke-width="1.5" fill="none"/></svg>
<div class="t val" style="transform:scaleX(0.918);transform-origin:0 0;left:692px;top:300px">Auto-Rotate</div>
<div class="a" style="left:776.5px;top:297.3px;width:70px;height:17px;border:1px solid #5c5c5c;border-radius:2px"></div>
<svg style="left:776.5px;top:297.3px" width="70" height="17" viewBox="0 0 70 17" fill="none" stroke="#777" stroke-width="0.8">
 <path d="M17.5 1 v15 M35 1 v15 M52.5 1 v15" stroke="#5c5c5c"/>
 <rect x="3.5" y="2.5" width="10" height="12"/><circle cx="8.5" cy="6" r="1.3" fill="#777"/><rect x="5.5" y="8" width="6" height="6" rx="2" fill="#777"/>
 <rect x="21.5" y="2.5" width="10" height="12"/><rect x="25" y="5.5" width="5" height="6" rx="2" fill="#777"/><circle cx="23.5" cy="8.5" r="1" fill="#777"/>
 <rect x="39" y="2.5" width="10" height="12"/><circle cx="44" cy="6.5" r="3" fill="#777"/><path d="M43 11 h2 l-1 2z" fill="#777"/>
 <rect x="56.5" y="2.5" width="10" height="12"/><rect x="57.5" y="5.5" width="5" height="6" rx="2" fill="#777"/><path d="M64 7.5 l2 1 l-2 1z" fill="#777"/>
</svg>
<div class="a" style="left:679.7px;top:322.3px;width:8.6px;height:8.6px;border:1px solid #6a6a6a;border-radius:1.5px"></div>
<div class="t dis" style="transform:scaleX(0.918);transform-origin:0 0;left:692px;top:323px">Transverse</div>

<!-- Options -->
<div class="a" style="left:616px;top:357px;width:344.5px;height:126px;border:1px dotted #6a6a6a;border-radius:4px 0 0 0"></div>
<div class="t lbl" style="transform:scaleX(0.918);transform-origin:0 0;left:620px;top:353.4px;background:#535353;padding:0 4px 0 2.7px">Options</div>

<div class="t lbl" style="transform:scaleX(0.918);transform-origin:100% 0;left:573.5px;width:100px;text-align:right;top:374px">Print Layers:</div>
<div class="dd" style="left:676.6px;top:371px;width:154.4px;height:14.5px;border:1px solid #575757"></div>
<div class="t val" style="transform:scaleX(0.918);transform-origin:0 0;left:681px;top:374px">Visible &amp; Printable Layers</div>
<div class="chev" style="left:821.5px;top:374.5px"></div>

<div class="t lbl" style="transform:scaleX(0.918);transform-origin:100% 0;left:573.5px;width:100px;text-align:right;top:397.4px">Placement:</div>
<svg style="left:676px;top:393.3px" width="14" height="14" viewBox="0 0 14 14" fill="none" stroke="#c8c8c8" stroke-width="0.8"><rect x="0.5" y="0.5" width="3" height="3"/><rect x="5.5" y="0.5" width="3" height="3"/><rect x="10.5" y="0.5" width="3" height="3"/><rect x="0.5" y="5.5" width="3" height="3"/><rect x="5.5" y="5.5" width="3" height="3" fill="#eee"/><rect x="10.5" y="5.5" width="3" height="3"/><rect x="0.5" y="10.5" width="3" height="3"/><rect x="5.5" y="10.5" width="3" height="3"/><rect x="10.5" y="10.5" width="3" height="3"/></svg>
<div class="t lbl" style="transform:scaleX(0.918);transform-origin:0 0;left:696.9px;top:397.4px">X:</div>
<div class="a" style="left:707.8px;top:394px;width:52.2px;height:13px;background:#444;border:1px solid #3f3f3f"></div>
<div class="t val" style="transform:scaleX(0.918);transform-origin:0 0;left:711px;top:397.4px">0 pt</div>
<div class="t lbl" style="transform:scaleX(0.918);transform-origin:0 0;left:768.2px;top:397.4px">Y:</div>
<div class="a" style="left:779.5px;top:394px;width:51.5px;height:13px;background:#444;border:1px solid #3f3f3f"></div>
<div class="t val" style="transform:scaleX(0.918);transform-origin:0 0;left:782.5px;top:397.4px">0 pt</div>

<div class="t lbl" style="transform:scaleX(0.918);transform-origin:100% 0;left:573.5px;width:100px;text-align:right;top:418.8px">Scaling:</div>
<div class="dd" style="left:676.6px;top:416px;width:154.4px;height:13.5px;border:1px solid #575757"></div>
<div class="t val" style="transform:scaleX(0.918);transform-origin:0 0;left:681px;top:418.8px">Do Not Scale</div>
<div class="chev" style="left:821.5px;top:419px"></div>
<div class="t dis" style="transform:scaleX(0.918);transform-origin:0 0;left:839.4px;top:418.8px">Overlap:</div>
<div class="a" style="left:876px;top:415.3px;width:67px;height:14.3px;border-radius:2px;background:#575757"></div>
<svg style="left:877px;top:416px" width="14" height="13" viewBox="0 0 14 13"><path d="M3 5 L5.5 2.5 L8 5 M3 8 L5.5 10.5 L8 8" stroke="#707070" stroke-width="0.9" fill="none"/><path d="M11.5 1 v11" stroke="#666" stroke-width="0.8"/></svg>
<div class="t dis" style="transform:scaleX(0.918);transform-origin:0 0;left:891px;top:418.8px;color:#6c6c6c">0 pt</div>

<div class="t lbl" style="transform:scaleX(0.918);transform-origin:0 0;left:678px;top:441.4px">Scale:</div>
<div class="t dis" style="transform:scaleX(0.918);transform-origin:0 0;left:729.7px;top:441.4px">W:</div>
<div class="a" style="left:742.2px;top:437.3px;width:64px;height:14.6px;border-radius:2px;background:#575757"></div>
<div class="t dis" style="transform:scaleX(0.918);transform-origin:0 0;left:745.5px;top:441.4px;color:#6c6c6c">100</div>
<div class="a" style="left:814px;top:437.4px;width:18px;height:17.2px;border-radius:2px;background:#575757"></div>
<svg style="left:819px;top:439px" width="8" height="14" viewBox="0 0 8 14" fill="none" stroke="#727272" stroke-width="1.1"><rect x="1.5" y="1" width="5" height="6" rx="2.5"/><rect x="1.5" y="7" width="5" height="6" rx="2.5"/></svg>
<div class="t dis" style="transform:scaleX(0.918);transform-origin:0 0;left:865.2px;top:441.4px">H:</div>
<div class="a" style="left:876px;top:437.3px;width:64.4px;height:14.6px;border-radius:2px;background:#575757"></div>
<div class="t dis" style="transform:scaleX(0.918);transform-origin:0 0;left:879.5px;top:441.4px;color:#6c6c6c">100</div>

<div class="a" style="left:676.6px;top:461.6px;width:9px;height:8.6px;border:1px solid #6a6a6a;border-radius:1.5px"></div>
<div class="t dis" style="transform:scaleX(0.918);transform-origin:0 0;left:689.4px;top:462.5px">Tile Range:</div>
<div class="a" style="left:737.2px;top:458.4px;width:79.8px;height:14.6px;border-radius:2px;background:#575757"></div>

<!-- buttons -->
<div class="a" style="left:463px;top:500.7px;width:67px;height:17.5px;border-radius:9px;background:#575757"></div>
<div class="t dis" style="left:463px;width:67px;text-align:center;top:505.5px;font-size:8.3px;color:#767676">Page Setup...</div>
<div class="a" style="left:538px;top:500.7px;width:64.7px;height:17.5px;border-radius:9px;background:#575757"></div>
<div class="t dis" style="left:538px;width:64.7px;text-align:center;top:505.5px;font-size:8.3px;color:#767676">Setup...</div>
<div class="a" style="left:750px;top:499.4px;width:66px;height:19px;border-radius:10px;border:1.2px solid #cdcdcd"></div>
<div class="t val" style="left:750px;width:66px;text-align:center;top:505.5px;font-size:8.8px">Done</div>
<div class="a" style="left:826.5px;top:499.4px;width:65.5px;height:19px;border-radius:10px;border:1.2px solid #cdcdcd"></div>
<div class="t val" style="left:826.5px;width:65.5px;text-align:center;top:505.5px;font-size:8.8px">Cancel</div>
<div class="a" style="left:895.7px;top:499.4px;width:65.5px;height:19px;border-radius:10px;border:2px solid #eeeeee"></div>
<div class="t val" style="left:895.7px;width:65.5px;text-align:center;top:505.5px;font-size:8.8px">Save</div>
</body></html>
